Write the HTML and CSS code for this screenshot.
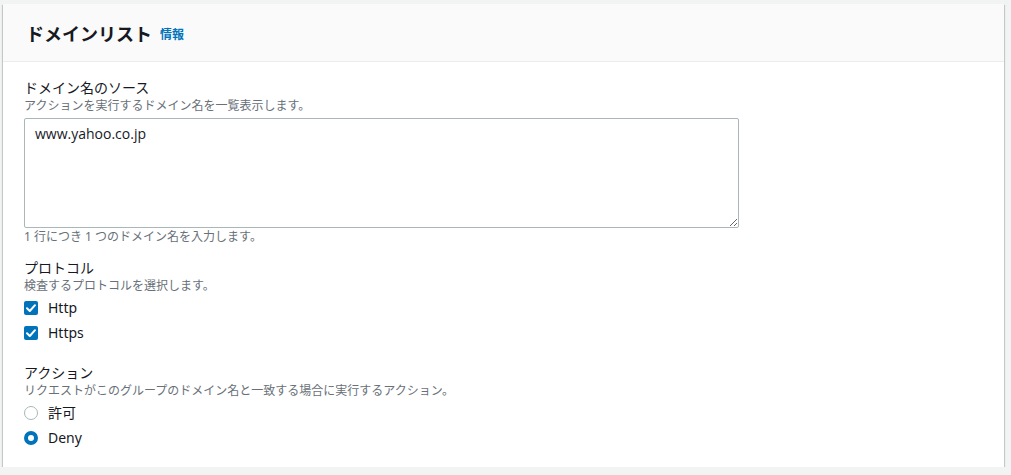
FILE: index.html
```html
<!DOCTYPE html>
<html lang="ja">
<head>
<meta charset="utf-8">
<link rel="stylesheet" href="styles.css">
</head>
<body>
<div class="card">
  <div class="card-header">
    <h2 class="title">ドメインリスト</h2>
    <a class="info" href="#">情報</a>
  </div>
  <div class="card-body">
    <div class="field field-first">
      <div class="label">ドメイン名のソース</div>
      <div class="desc">アクションを実行するドメイン名を一覧表示します。</div>
      <textarea class="textarea">www.yahoo.co.jp</textarea>
      <div class="hint">1 行につき 1 つのドメイン名を入力します。</div>
    </div>
    <div class="field">
      <div class="label">プロトコル</div>
      <div class="desc">検査するプロトコルを選択します。</div>
      <div class="options">
        <label class="option"><span class="checkbox checked"><svg viewBox="0 0 14 14" width="14" height="14"><path d="M3 7.2 L5.8 10 L11 4.2" fill="none" stroke="#fff" stroke-width="2" stroke-linecap="round" stroke-linejoin="round"/></svg></span><span class="opt-text">Http</span></label>
        <label class="option"><span class="checkbox checked"><svg viewBox="0 0 14 14" width="14" height="14"><path d="M3 7.2 L5.8 10 L11 4.2" fill="none" stroke="#fff" stroke-width="2" stroke-linecap="round" stroke-linejoin="round"/></svg></span><span class="opt-text">Https</span></label>
      </div>
    </div>
    <div class="field">
      <div class="label">アクション</div>
      <div class="desc">リクエストがこのグループのドメイン名と一致する場合に実行するアクション。</div>
      <div class="options">
        <label class="option"><span class="radio"></span><span class="opt-text">許可</span></label>
        <label class="option"><span class="radio selected"></span><span class="opt-text">Deny</span></label>
      </div>
    </div>
  </div>
</div>
</body>
</html>
```

FILE: styles.css
```css
html, body {
  margin: 0;
  padding: 0;
  background: #f2f3f3;
}
body {
  padding: 4px 7px 0 3px;
  font-family: "Noto Sans", "Noto Sans CJK JP", sans-serif;
  color: #16191f;
}
.card {
  background: #fff;
  box-shadow: 0 1px 1px 0 rgba(0, 28, 36, 0.3), 1px 1px 1px 0 rgba(0, 28, 36, 0.15), -1px 1px 1px 0 rgba(0, 28, 36, 0.15);
  height: 463px;
  box-sizing: border-box;
}
.card-header {
  background: #fafafa;
  border-bottom: 1px solid #eaeded;
  height: 58px;
  box-sizing: border-box;
  display: flex;
  align-items: center;
  padding: 0 20px 0 23px;
  gap: 8px;
}
.title {
  margin: 0;
  font-size: 18px;
  font-weight: 700;
  line-height: 22px;
  color: #16191f;
  font-family: "Noto Sans CJK JP", sans-serif;
}
.info {
  font-size: 12px;
  font-weight: 700;
  color: #0073bb;
  text-decoration: none;
  margin-top: 2px;
  font-family: "Noto Sans CJK JP", sans-serif;
}
.card-body {
  padding: 16px 20px 0 21px;
}
.field {
  margin-bottom: 20px;
}
.field-first {
  margin-bottom: 13px;
}
.label {
  font-size: 14px;
  line-height: 20px;
  color: #16191f;
}
.desc, .hint {
  font-size: 12px;
  line-height: 16px;
  color: #687078;
}
.textarea {
  display: block;
  margin-top: 4px;
  width: 715px;
  height: 110px;
  box-sizing: border-box;
  border: 1px solid #aab7b8;
  border-radius: 2px;
  padding: 4px 10px;
  font-family: "Open Sans", "Noto Sans", sans-serif;
  font-size: 14px;
  line-height: 22px;
  color: #16191f;
  resize: vertical;
  background: #fff;
}
.hint {
  margin-top: 1px;
}
.options {
  display: flex;
  flex-direction: column;
  gap: 5px;
  margin-top: 4px;
}
.option {
  display: flex;
  align-items: center;
  gap: 10px;
  height: 20px;
  font-size: 14px;
  color: #16191f;
}
.checkbox {
  width: 14px;
  height: 14px;
  border-radius: 2px;
  background: #0073bb;
  display: inline-flex;
}
.radio {
  width: 14px;
  height: 14px;
  border-radius: 50%;
  box-sizing: border-box;
  border: 1.5px solid #aab7b8;
  background: #fff;
}
.radio.selected {
  border: 4px solid #0073bb;
}
.opt-text {
  line-height: 20px;
}
```
